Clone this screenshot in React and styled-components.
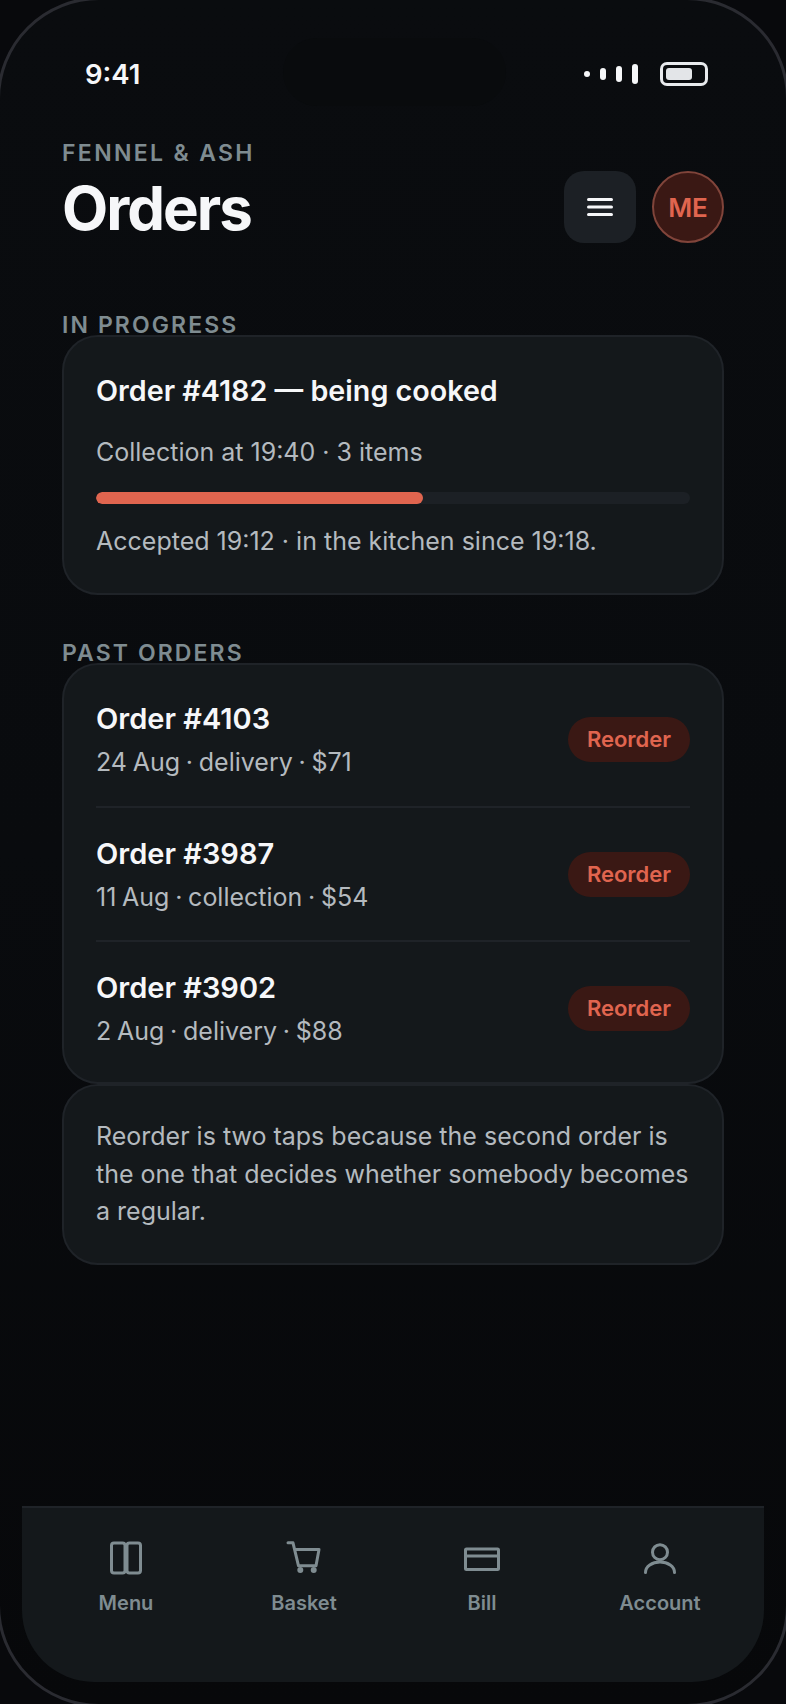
import React from 'react'
import styled, { createGlobalStyle } from 'styled-components'

const GlobalStyle = createGlobalStyle`
  html, body {
    margin: 0;
    padding: 0;
    background: #08090c;
    overflow: hidden;
  }
  * {
    box-sizing: border-box;
  }
`

// the frame is a little bigger than the window, only its corners show
const Phone = styled.div`
  position: relative;
  display: flex;
  flex-direction: column;
  width: 792px;
  height: 1710px;
  margin: -3px;
  border: 3px solid #2a2b31;
  border-radius: 102px;
  overflow: hidden;
  background: linear-gradient(180deg, #0a0c0f 0%, #090b0e 50%, #07080a 100%);
  font-family: Inter, 'Liberation Sans', sans-serif;
  color: #f6f7f9;
`

const Island = styled.div`
  position: absolute;
  top: 38px;
  left: 283px;
  width: 223px;
  height: 68px;
  border-radius: 34px;
  background: #090b0d;
`

const StatusBar = styled.div`
  display: flex;
  align-items: center;
  justify-content: space-between;
  height: 24px;
  margin-top: 62px;
  padding: 0 78px 0 85px;
`

const Time = styled.div`
  font-size: 27.5px;
  font-weight: 600;
  line-height: 24px;
`

const StatusIcons = styled.div`
  display: flex;
  align-items: center;
  gap: 22px;
`

const Signal = styled.div`
  display: flex;
  align-items: center;
  gap: 10px;
`

const SignalBar = styled.div`
  width: 6px;
  height: ${p => p.$h}px;
  border-radius: 3px;
  background: #f6f7f9;
`

const Battery = styled.div`
  width: 48px;
  height: 24px;
  padding: 3px;
  border: 3px solid #e8eaed;
  border-radius: 7px;
`

const BatteryFill = styled.div`
  width: 26px;
  height: 12px;
  border-radius: 3px;
  background: #e3e5e8;
`

const Content = styled.div`
  display: flex;
  flex-direction: column;
  padding: 0 62px;
`

const Header = styled.header`
  display: flex;
  align-items: flex-end;
  justify-content: space-between;
  margin-top: 53px;
`

const Brand = styled.div`
  font-size: 23px;
  font-weight: 600;
  line-height: 28px;
  letter-spacing: 2.34px;
  color: #7f8c91;
`

const Title = styled.h1`
  margin: 5px 0 0;
  font-size: 60px;
  font-weight: 700;
  line-height: 72px;
  letter-spacing: -2px;
  color: #f6f7f9;
`

const HeaderActions = styled.div`
  display: flex;
  gap: 16px;
  margin-bottom: 1px;
`

const MenuButton = styled.div`
  display: flex;
  align-items: center;
  justify-content: center;
  width: 72px;
  height: 72px;
  border-radius: 20px;
  background: #1c2025;
`

const Avatar = styled.div`
  display: flex;
  align-items: center;
  justify-content: center;
  width: 72px;
  height: 72px;
  border: 2px solid #80443a;
  border-radius: 50%;
  background: #3a1814;
  color: #e0654f;
  font-size: 26px;
  font-weight: 600;
`

const SectionLabel = styled.div`
  height: 19px;
  margin-top: ${p => p.$top}px;
  font-size: 23px;
  font-weight: 600;
  line-height: 18px;
  letter-spacing: 2.1px;
  color: #7f8c91;
`

const Card = styled.section`
  position: relative;
  border: 2px solid #1f2328;
  border-radius: 36px;
  background: #14181b;
  padding: ${p => p.$pad};
`

const ActiveTitle = styled.div`
  font-size: 28.7px;
  font-weight: 600;
  line-height: 40px;
  color: #f6f7f9;
`

const BodyText = styled.div`
  font-size: 25px;
  font-weight: 400;
  line-height: 36px;
  color: #b4babf;
  margin-top: ${p => p.$top || 0}px;
`

const Track = styled.div`
  height: 12px;
  margin: 22px 0 19px;
  border-radius: 6px;
  background: #1c2025;
  overflow: hidden;
`

const Fill = styled.div`
  height: 100%;
  border-radius: 6px;
  background: #e0654f;
`

const OrderRow = styled.div`
  display: flex;
  align-items: center;
  justify-content: space-between;
  height: 134px;
  border-top: ${p => (p.$first ? 'none' : '2px solid #1f2328')};
`

const OrderTitle = styled.div`
  font-size: 29px;
  font-weight: 600;
  line-height: 40px;
  color: #f6f7f9;
`

const OrderMeta = styled.div`
  margin-top: 6px;
  font-size: 25px;
  line-height: 34px;
  word-spacing: -1.3px;
  color: #b4babf;
`

const ReorderButton = styled.div`
  display: flex;
  align-items: center;
  justify-content: center;
  width: 122px;
  height: 45px;
  border-radius: 23px;
  background: #3a1814;
  color: #e0654f;
  font-size: 22px;
  font-weight: 600;
`

const Note = styled.div`
  font-size: 25px;
  line-height: 37.5px;
  color: #b4babf;
`

const Nav = styled.nav`
  display: grid;
  grid-template-columns: repeat(4, 178px);
  justify-content: center;
  height: 176px;
  margin: auto 22px 22px;
  padding-top: 30px;
  border-top: 2px solid #1f2328;
  border-radius: 0 0 72px 72px;
  background: #14181b;
`

const NavItem = styled.div`
  display: flex;
  flex-direction: column;
  align-items: center;
  gap: 12px;
  color: #7f8c91;
  font-size: 20px;
  font-weight: 600;
  line-height: 26px;
`

const NavIcon = styled.svg`
  width: 40px;
  height: 40px;
  fill: none;
  stroke: currentColor;
  stroke-width: 3px;
  stroke-linecap: round;
  stroke-linejoin: round;
`

const pastOrders = [
  { id: '#4103', meta: '24 Aug · delivery · $71' },
  { id: '#3987', meta: '11 Aug · collection · $54' },
  { id: '#3902', meta: '2 Aug · delivery · $88' },
]

const navItems = [
  {
    label: 'Menu',
    icon: (
      <>
        <rect x="5.5" y="5" width="13.5" height="30" rx="2.5" />
        <rect x="21" y="5" width="13.5" height="30" rx="2.5" />
      </>
    ),
  },
  {
    label: 'Basket',
    icon: (
      <>
        <path d="M4 4.800h5l5.500 23h17.500l3-16.300H10.500" />
        <circle cx="16.300" cy="32" r="1.500" />
        <circle cx="29.700" cy="32" r="1.500" />
      </>
    ),
  },
  {
    label: 'Bill',
    icon: (
      <>
        <rect x="3.500" y="11" width="33" height="20.500" rx="1" />
        <path d="M3.500 18h33" />
      </>
    ),
  },
  {
    label: 'Account',
    icon: (
      <>
        <circle cx="20" cy="14.200" r="7.500" />
        <path d="M5.500 34.500c0-6 6.500-10.500 14.500-10.500s14.500 4.500 14.500 10.500" />
      </>
    ),
  },
]

export default function App() {
  return (
    <>
      <GlobalStyle />
      <Phone>
        <Island />
        <StatusBar>
          <Time>9:41</Time>
          <StatusIcons>
            <Signal>
              {[6, 12, 16, 20].map(h => <SignalBar key={h} $h={h} />)}
            </Signal>
            <Battery><BatteryFill /></Battery>
          </StatusIcons>
        </StatusBar>
        <Content>
          <Header>
            <div>
              <Brand>FENNEL &amp; ASH</Brand>
              <Title>Orders</Title>
            </div>
            <HeaderActions>
              <MenuButton>
                <svg width="28" height="20" viewBox="0 0 28 20" fill="none" stroke="#f6f7f9" strokeWidth="3" strokeLinecap="round">
                  <path d="M2.500 2.500h23M2.500 10h23M2.500 17.500h23" />
                </svg>
              </MenuButton>
              <Avatar>ME</Avatar>
            </HeaderActions>
          </Header>

          <SectionLabel $top={72}>IN PROGRESS</SectionLabel>
          <Card $pad="34px 32px 34px">
            <ActiveTitle>Order #4182 — being cooked</ActiveTitle>
            <BodyText $top={23}>Collection at 19:40 · 3 items</BodyText>
            <Track><Fill style={{ width: '55%' }} /></Track>
            <BodyText>Accepted 19:12 · in the kitchen since 19:18.</BodyText>
          </Card>

          <SectionLabel $top={49}>PAST ORDERS</SectionLabel>
          <Card $pad="7px 32px 8px">
            {pastOrders.map((order, i) => (
              <OrderRow key={order.id} $first={i === 0}>
                <div>
                  <OrderTitle>Order {order.id}</OrderTitle>
                  <OrderMeta>{order.meta}</OrderMeta>
                </div>
                <ReorderButton>Reorder</ReorderButton>
              </OrderRow>
            ))}
          </Card>

          <Card $pad="32px">
            <Note>Reorder is two taps because the second order is the one that decides whether somebody becomes a regular.</Note>
          </Card>
        </Content>

        <Nav>
          {navItems.map(item => (
            <NavItem key={item.label}>
              <NavIcon viewBox="0 0 40 40">{item.icon}</NavIcon>
              {item.label}
            </NavItem>
          ))}
        </Nav>
      </Phone>
    </>
  )
}
